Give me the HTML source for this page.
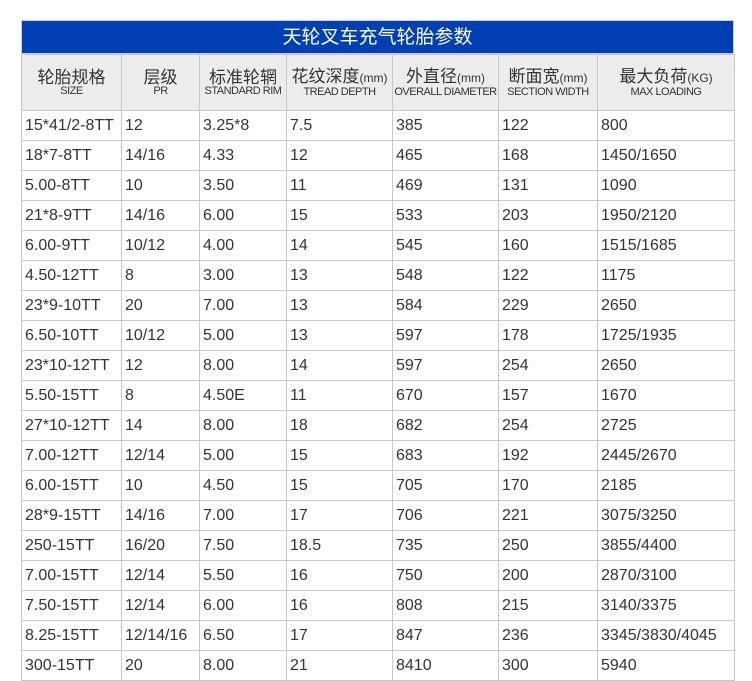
<!DOCTYPE html>
<html><head><meta charset="utf-8"><style>
body{margin:0;background:#fff;width:752px;height:681px;overflow:hidden;font-family:"Liberation Sans","Noto Sans CJK SC",sans-serif;}
.t{position:absolute;left:21px;top:20px;width:713px;height:34px;background:#0040b4;color:#fff;font-size:19px;line-height:34px;text-align:center;border:1px solid #ccc;box-sizing:border-box;}
table{position:absolute;left:21px;top:54px;border-collapse:collapse;table-layout:fixed;width:713px;}
td{border:1px solid #c8c8c8;font-size:16px;color:#333;padding:0 0 0 3px;height:29px;white-space:nowrap;overflow:hidden;}
tr.h td{background:#ececec;height:55px;text-align:center;padding:0;line-height:17px;font-size:17px;color:#333}
tr.h small{display:block;font-size:11px;line-height:11px;letter-spacing:-0.5px}
tr.h i{font-style:normal;font-size:12px}
</style></head><body>
<div class="t">天轮叉车充气轮胎参数</div>
<table>
<colgroup><col style="width:100px"><col style="width:78px"><col style="width:87px"><col style="width:106px"><col style="width:106px"><col style="width:99px"><col style="width:137px"></colgroup>
<tr class="h"><td>轮胎规格<small>SIZE</small></td><td>层级<small>PR</small></td><td>标准轮辋<small>STANDARD RIM</small></td><td>花纹深度<i>(mm)</i><small>TREAD DEPTH</small></td><td>外直径<i>(mm)</i><small>OVERALL DIAMETER</small></td><td>断面宽<i>(mm)</i><small>SECTION WIDTH</small></td><td>最大负荷<i>(KG)</i><small>MAX LOADING</small></td></tr>
<tr><td>15*41/2-8TT</td><td>12</td><td>3.25*8</td><td>7.5</td><td>385</td><td>122</td><td>800</td></tr>
<tr><td>18*7-8TT</td><td>14/16</td><td>4.33</td><td>12</td><td>465</td><td>168</td><td>1450/1650</td></tr>
<tr><td>5.00-8TT</td><td>10</td><td>3.50</td><td>11</td><td>469</td><td>131</td><td>1090</td></tr>
<tr><td>21*8-9TT</td><td>14/16</td><td>6.00</td><td>15</td><td>533</td><td>203</td><td>1950/2120</td></tr>
<tr><td>6.00-9TT</td><td>10/12</td><td>4.00</td><td>14</td><td>545</td><td>160</td><td>1515/1685</td></tr>
<tr><td>4.50-12TT</td><td>8</td><td>3.00</td><td>13</td><td>548</td><td>122</td><td>1175</td></tr>
<tr><td>23*9-10TT</td><td>20</td><td>7.00</td><td>13</td><td>584</td><td>229</td><td>2650</td></tr>
<tr><td>6.50-10TT</td><td>10/12</td><td>5.00</td><td>13</td><td>597</td><td>178</td><td>1725/1935</td></tr>
<tr><td>23*10-12TT</td><td>12</td><td>8.00</td><td>14</td><td>597</td><td>254</td><td>2650</td></tr>
<tr><td>5.50-15TT</td><td>8</td><td>4.50E</td><td>11</td><td>670</td><td>157</td><td>1670</td></tr>
<tr><td>27*10-12TT</td><td>14</td><td>8.00</td><td>18</td><td>682</td><td>254</td><td>2725</td></tr>
<tr><td>7.00-12TT</td><td>12/14</td><td>5.00</td><td>15</td><td>683</td><td>192</td><td>2445/2670</td></tr>
<tr><td>6.00-15TT</td><td>10</td><td>4.50</td><td>15</td><td>705</td><td>170</td><td>2185</td></tr>
<tr><td>28*9-15TT</td><td>14/16</td><td>7.00</td><td>17</td><td>706</td><td>221</td><td>3075/3250</td></tr>
<tr><td>250-15TT</td><td>16/20</td><td>7.50</td><td>18.5</td><td>735</td><td>250</td><td>3855/4400</td></tr>
<tr><td>7.00-15TT</td><td>12/14</td><td>5.50</td><td>16</td><td>750</td><td>200</td><td>2870/3100</td></tr>
<tr><td>7.50-15TT</td><td>12/14</td><td>6.00</td><td>16</td><td>808</td><td>215</td><td>3140/3375</td></tr>
<tr><td>8.25-15TT</td><td>12/14/16</td><td>6.50</td><td>17</td><td>847</td><td>236</td><td>3345/3830/4045</td></tr>
<tr><td>300-15TT</td><td>20</td><td>8.00</td><td>21</td><td>8410</td><td>300</td><td>5940</td></tr>
</table>
</body></html>
